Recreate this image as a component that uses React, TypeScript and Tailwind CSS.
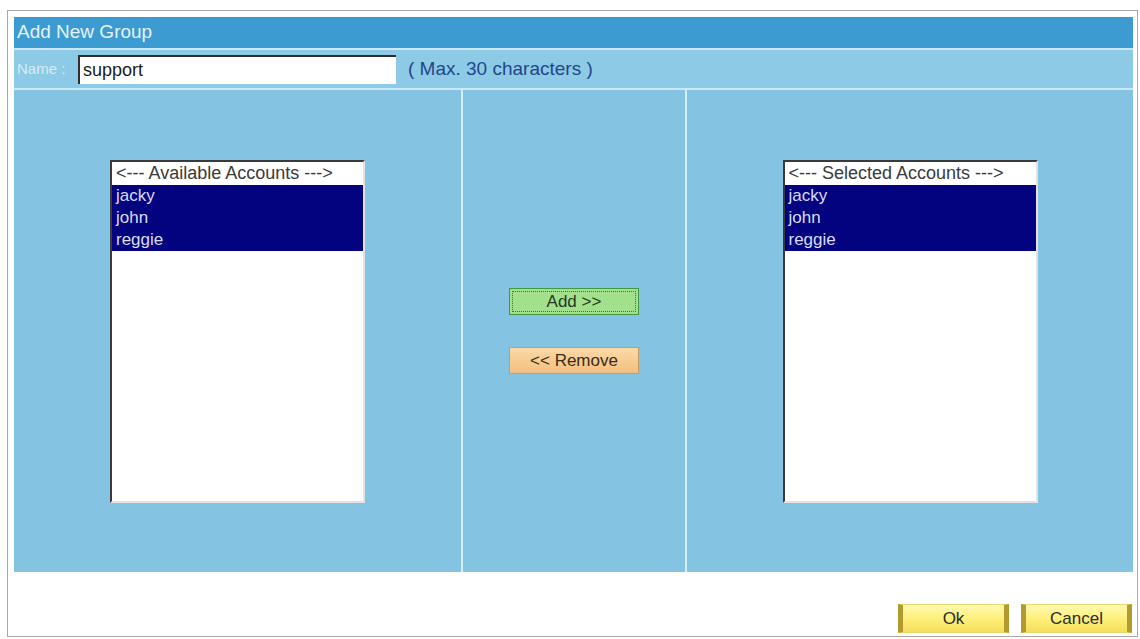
import React from "react";

const accounts = ["jacky", "john", "reggie"];

const ListBox = ({ title }: { title: string }) => {
  return (
    <div className="w-[255px] h-[343px] bg-white border-2 border-t-[#3a3a3a] border-l-[#3a3a3a] border-r-[#e6e2de] border-b-[#e6e2de] overflow-hidden">
      <div className="h-[23px] leading-[23px] pl-[4px] text-[18px] text-[#3a3a3a] whitespace-nowrap">
        {title}
      </div>
      {accounts.map((a) => (
        <div
          key={a}
          className="h-[22px] leading-[21px] pl-[4px] text-[17px] bg-[#03037f] text-[#dcdcf5]"
        >
          {a}
        </div>
      ))}
    </div>
  );
};

const FooterButton = ({ label }: { label: string }) => {
  return (
    <button className="w-[111px] h-[29px] border-l-[5px] border-r-[5px] border-y border-l-[#b39a2e] border-r-[#b39a2e] border-y-[#e9d870] bg-gradient-to-b from-[#fff9b0] via-[#fff07a] to-[#f3df5c] text-[17px] text-[#2b2b2b] leading-none">
      {label}
    </button>
  );
};

export default function App() {
  return (
    <div
      className="w-[1140px] h-[639px] bg-white pt-[10px] pl-[7px]"
      style={{ fontFamily: '"Liberation Sans", Arial, sans-serif' }}
    >
      <div className="w-[1131px] h-[627px] border border-[#a8a8a8] pt-[6px] pl-[6px] pr-[4px] flex flex-col">
        {/* title bar */}
        <div className="h-[31px] bg-[#3c9bd0] flex items-center pl-[3px] text-[19px] text-[#e6f3fb]">
          Add New Group
        </div>
        <div className="h-[2px] bg-[#cbe8f5]" />

        {/* name row */}
        <div className="h-[38px] bg-[#8ccae6] flex items-center pl-[3px]">
          <span className="w-[61px] text-[15px] text-[#d6ecf7]">Name :</span>
          <div className="w-[318px] h-[29px] bg-white border-t-2 border-l-2 border-t-[#2e2e2e] border-l-[#2e2e2e] flex items-center pl-[3px] text-[18px] text-[#1a1a1a]">
            support
          </div>
          <span className="ml-[12px] text-[19px] text-[#23468a]">
            ( Max. 30 characters )
          </span>
        </div>
        <div className="h-[2px] bg-[#cbe8f5]" />

        {/* main area */}
        <div className="h-[482px] bg-[#84c3e1] flex">
          <div className="w-[447px] flex items-center justify-center">
            <ListBox title="<--- Available Accounts --->" />
          </div>
          <div className="w-[2px] bg-[#d4eef9]" />
          <div className="w-[222px] flex flex-col items-center justify-center gap-[32px]">
            <button className="w-[130px] h-[27px] bg-[#a2e08c] border border-[#3f9a43] p-[2px]">
              <div className="w-full h-full border border-dotted border-[#4a6a40] flex items-center justify-center text-[17px] text-[#1f3a1f] leading-none">
                Add &gt;&gt;
              </div>
            </button>
            <button className="w-[130px] h-[27px] bg-gradient-to-b from-[#fbd9a6] to-[#f2c07f] border border-[#c99a62] flex items-center justify-center text-[17px] text-[#3a2a1a] leading-none">
              &lt;&lt; Remove
            </button>
          </div>
          <div className="w-[2px] bg-[#d4eef9]" />
          <div className="flex-1 flex items-center justify-center">
            <ListBox title="<--- Selected Accounts --->" />
          </div>
        </div>

        {/* footer */}
        <div className="flex-1 flex items-end justify-end gap-[12px] pb-[3px] pr-[1px]">
          <FooterButton label="Ok" />
          <FooterButton label="Cancel" />
        </div>
      </div>
    </div>
  );
}
